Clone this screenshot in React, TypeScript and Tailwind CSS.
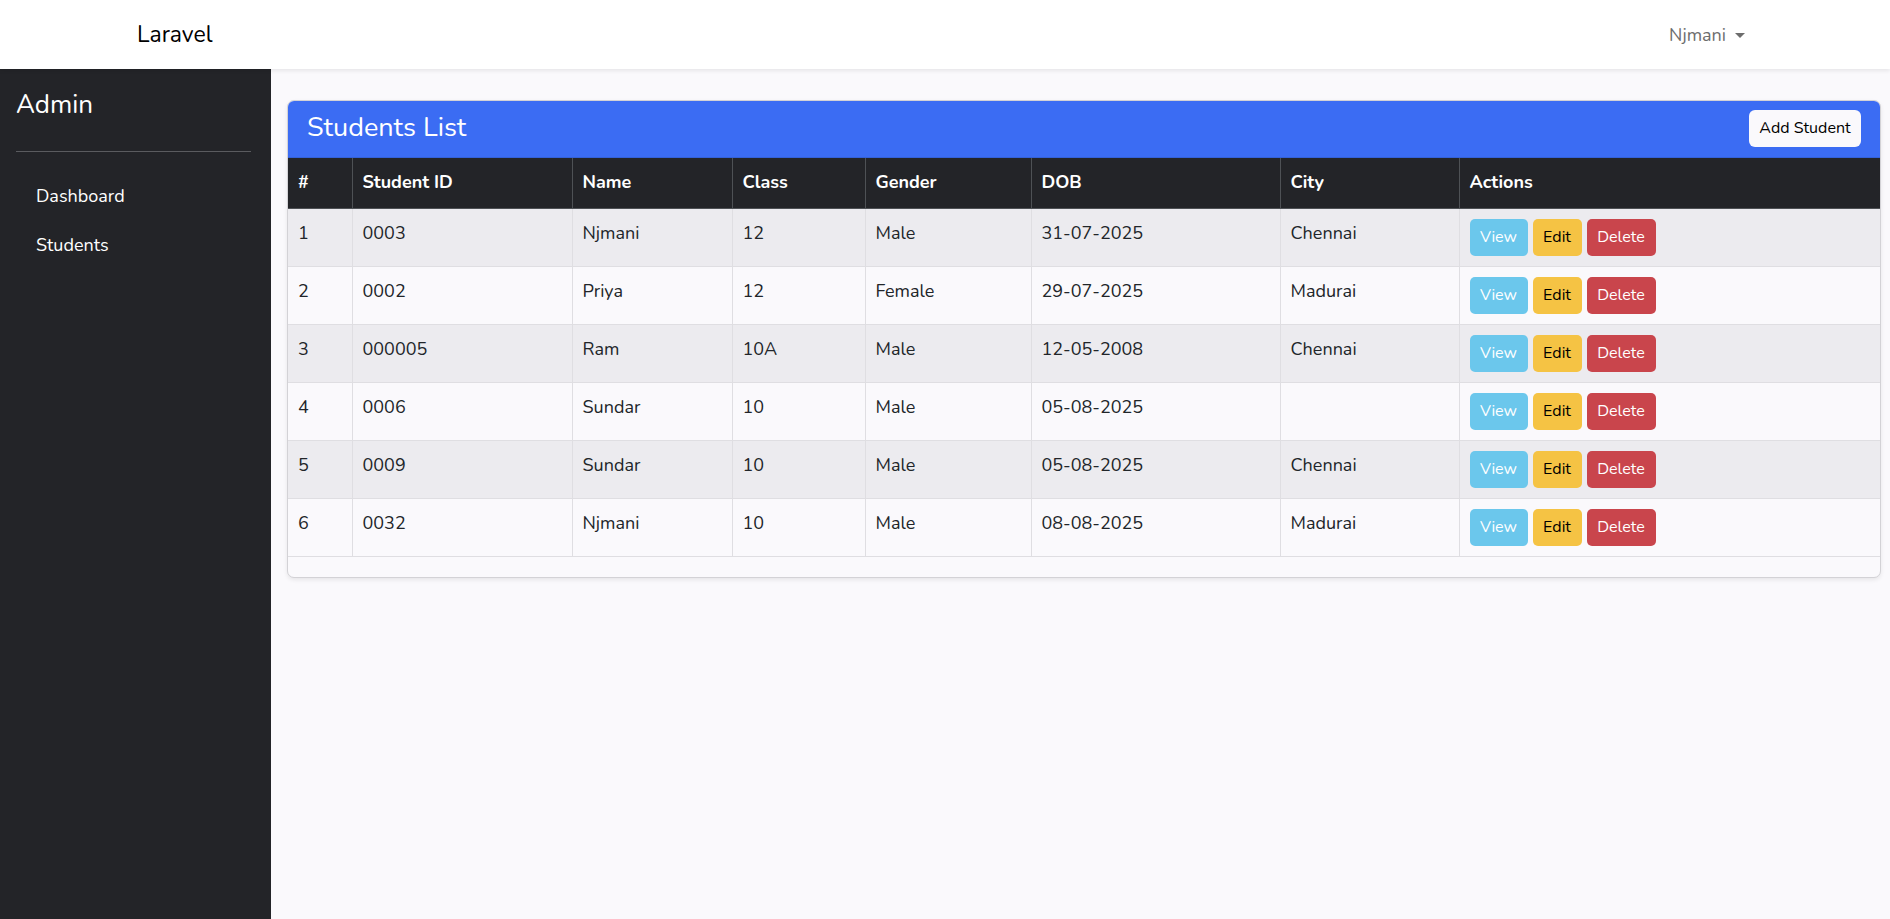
import React from "react";

type Row = { id: string; name: string; cls: string; gender: string; dob: string; city: string };

const rows: Row[] = [
  { id: "0003", name: "Njmani", cls: "12", gender: "Male", dob: "31-07-2025", city: "Chennai" },
  { id: "0002", name: "Priya", cls: "12", gender: "Female", dob: "29-07-2025", city: "Madurai" },
  { id: "000005", name: "Ram", cls: "10A", gender: "Male", dob: "12-05-2008", city: "Chennai" },
  { id: "0006", name: "Sundar", cls: "10", gender: "Male", dob: "05-08-2025", city: "" },
  { id: "0009", name: "Sundar", cls: "10", gender: "Male", dob: "05-08-2025", city: "Chennai" },
  { id: "0032", name: "Njmani", cls: "10", gender: "Male", dob: "08-08-2025", city: "Madurai" },
];

const headers = ["#", "Student ID", "Name", "Class", "Gender", "DOB", "City", "Actions"];
const widths = [64, 220, 160, 133, 166, 249, 179, 421];

export default function App() {
  return (
    <div
      className="min-h-screen flex flex-col bg-[#faf9fc] text-[#212529]"
      style={{ fontFamily: '"Nunito", Lato, "Noto Sans", sans-serif' }}
    >
      <nav className="h-[69px] shrink-0 bg-white shadow-[0_2px_4px_rgba(0,0,0,0.08)] flex items-center justify-between pl-[137px] pr-[145px] relative z-10">
        <span className="text-[23px] text-black leading-none">Laravel</span>
        <button className="flex items-center gap-[9px] text-[18px] text-[#6d6d6d] leading-none">
          <span>Njmani</span>
          <span className="w-0 h-0 border-l-[5px] border-r-[5px] border-t-[5px] border-l-transparent border-r-transparent border-t-[#6d6d6d] mt-[2px]" />
        </button>
      </nav>

      <div className="flex flex-1">
        <aside className="w-[271px] shrink-0 bg-[#232428] text-white px-[16px] pt-[20px]">
          <h2 className="text-[26px] leading-[31px] font-normal">Admin</h2>
          <div className="mt-[31px] w-[235px] h-px bg-[#5a5b5f]" />
          <ul className="mt-[20px] flex flex-col">
            <li className="pl-[20px] text-[18px] leading-[29px] py-[10px]">Dashboard</li>
            <li className="pl-[20px] text-[18px] leading-[29px] py-[10px]">Students</li>
          </ul>
        </aside>

        <main className="flex-1 pl-[16px] pr-[9px] pt-[31px]">
          <div className="border border-[#d3d2d6] rounded-[7px] overflow-hidden bg-[#faf9fc] shadow-[0_2px_4px_rgba(0,0,0,0.08)]">
            <div className="h-[57px] bg-[#3b6cf3] border-b border-[#3361d8] flex items-center justify-between pl-[19px] pr-[19px]">
              <h3 className="text-[27px] text-white font-normal leading-none mb-[4px]">Students List</h3>
              <button className="w-[112px] h-[37px] rounded-[6px] bg-[#faf9fc] text-[16px] text-black flex items-center justify-center mb-[2px]">
                Add Student
              </button>
            </div>
            <table className="w-full table-fixed border-collapse text-[18px] mb-[20px]">
              <colgroup>
                {widths.map((w, i) => (
                  <col key={i} style={{ width: w }} />
                ))}
              </colgroup>
              <thead>
                <tr className="bg-[#232428] text-white h-[50px]">
                  {headers.map((h, i) => (
                    <th
                      key={h}
                      className={`text-left font-bold align-middle px-[10px] border-b border-[#4e5155] ${
                        i > 0 ? "border-l border-l-[#4e5155]" : ""
                      }`}
                    >
                      {h}
                    </th>
                  ))}
                </tr>
              </thead>
              <tbody>
                {rows.map((r, idx) => (
                  <tr key={idx} className={`h-[58px] ${idx % 2 === 0 ? "bg-[#ecebef]" : "bg-[#faf9fc]"}`}>
                    <td className="align-top px-[10px] pt-[10px] leading-[28px] border-b border-[#dfdee2]">{idx + 1}</td>
                    <td className="align-top px-[10px] pt-[10px] leading-[28px] border-b border-l border-[#dfdee2]">{r.id}</td>
                    <td className="align-top px-[10px] pt-[10px] leading-[28px] border-b border-l border-[#dfdee2]">{r.name}</td>
                    <td className="align-top px-[10px] pt-[10px] leading-[28px] border-b border-l border-[#dfdee2]">{r.cls}</td>
                    <td className="align-top px-[10px] pt-[10px] leading-[28px] border-b border-l border-[#dfdee2]">{r.gender}</td>
                    <td className="align-top px-[10px] pt-[10px] leading-[28px] border-b border-l border-[#dfdee2]">{r.dob}</td>
                    <td className="align-top px-[10px] pt-[10px] leading-[28px] border-b border-l border-[#dfdee2]">{r.city}</td>
                    <td className="align-top px-[10px] pt-[10px] border-b border-l border-[#dfdee2]">
                      <div className="flex gap-[5px]">
                        <button className="w-[58px] h-[37px] rounded-[5px] bg-[#6bc7ec] text-white text-[16px] flex items-center justify-center">
                          View
                        </button>
                        <button className="w-[49px] h-[37px] rounded-[5px] bg-[#f5c344] text-black text-[16px] flex items-center justify-center">
                          Edit
                        </button>
                        <button className="w-[69px] h-[37px] rounded-[5px] bg-[#c9454c] text-white text-[16px] flex items-center justify-center">
                          Delete
                        </button>
                      </div>
                    </td>
                  </tr>
                ))}
              </tbody>
            </table>
          </div>
        </main>
      </div>
    </div>
  );
}
